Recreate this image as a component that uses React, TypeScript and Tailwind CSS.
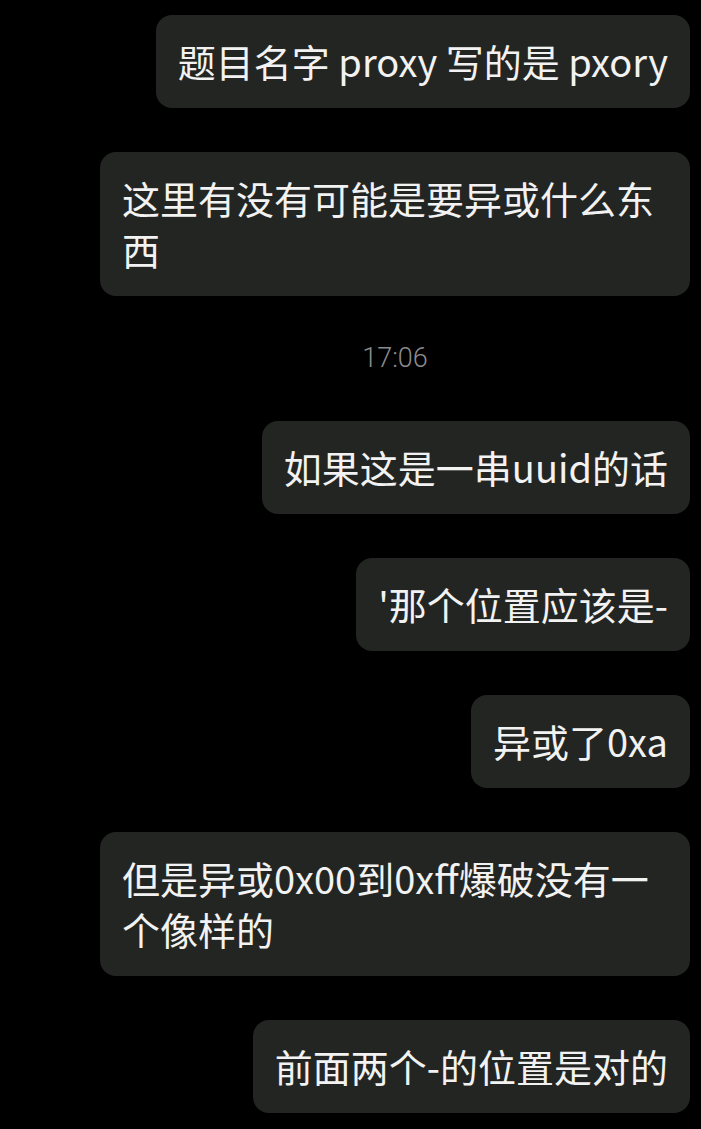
import React from 'react';

type Msg = { text: string } | { time: string };

const messages: Msg[] = [
  { text: '题目名字 proxy 写的是 pxory' },
  { text: '这里有没有可能是要异或什么东西' },
  { time: '17:06' },
  { text: '如果这是一串uuid的话' },
  { text: "'那个位置应该是-" },
  { text: '异或了0xa' },
  { text: '但是异或0x00到0xff爆破没有一个像样的' },
  { text: '前面两个-的位置是对的' },
];

const Bubble: React.FC<{ text: string }> = ({ text }) => (
  <div className="flex justify-end">
    <div className="max-w-[590px] rounded-[16px] bg-[#232523] px-[22px] pt-[20px] pb-[22px] text-[38px] leading-[51px] text-[#f2f2f2] break-all">
      {text}
    </div>
  </div>
);

export default function App() {
  return (
    <div
      className="min-h-[1129px] bg-black pl-[100px] pr-[11px] pt-[15px] flex flex-col gap-[44px]"
      style={{ fontFamily: '"Noto Sans CJK SC", sans-serif' }}
    >
      {messages.map((m, i) =>
        'time' in m ? (
          <div
            key={i}
            className="h-[37px] flex items-center justify-center text-[27px] font-light text-[#8c8c8c]"
            style={{ fontFamily: 'Roboto, sans-serif' }}
          >
            {m.time}
          </div>
        ) : (
          <Bubble key={i} text={m.text} />
        )
      )}
    </div>
  );
}
